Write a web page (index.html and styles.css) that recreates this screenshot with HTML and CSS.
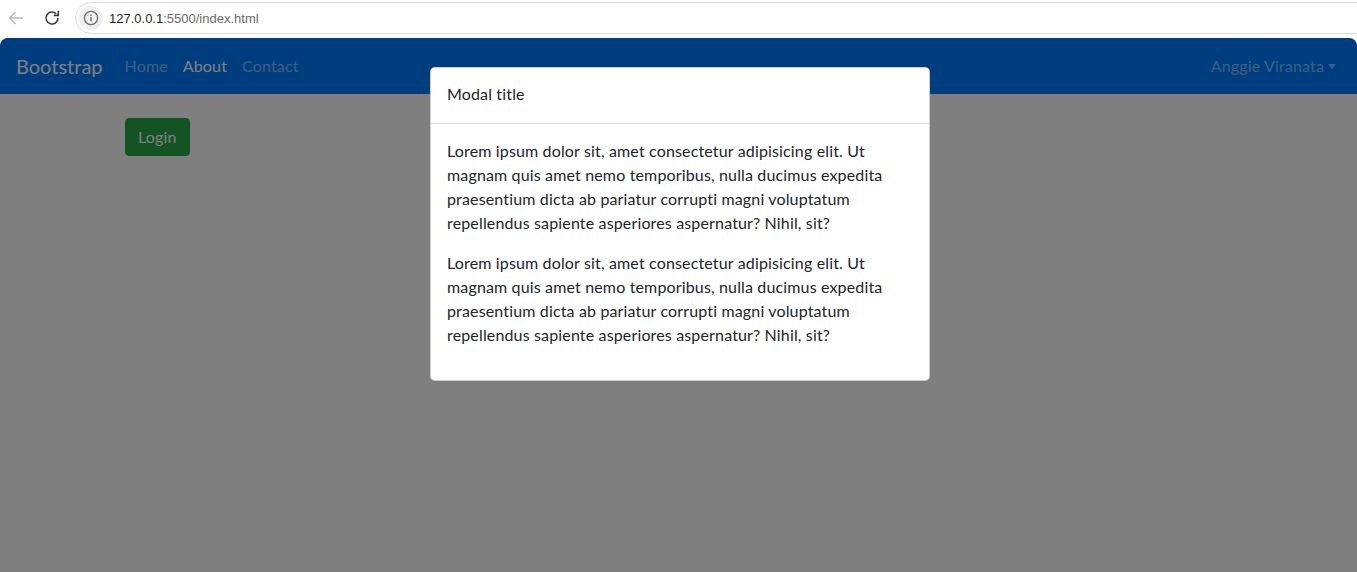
FILE: index.html
```html
<!DOCTYPE html>
<html lang="en">
<head>
<meta charset="utf-8">
<title>Bootstrap</title>
<link rel="stylesheet" href="styles.css">
</head>
<body>
  <header class="browser-bar">
    <button class="tool-btn back" aria-label="Back">
      <svg width="18" height="18" viewBox="0 0 18 18"><path d="M16 9H2.5M8.5 3L2.5 9l6 6" fill="none" stroke="currentColor" stroke-width="1.4"/></svg>
    </button>
    <button class="tool-btn reload" aria-label="Reload">
      <svg width="18" height="18" viewBox="0 0 18 18"><path d="M15 9a6 6 0 1 1-1.76-4.24" fill="none" stroke="currentColor" stroke-width="1.6"/><path d="M15.3 1.8v4.6h-4.6" fill="none" stroke="currentColor" stroke-width="1.6"/></svg>
    </button>
    <div class="omnibox">
      <span class="site-info">
        <svg width="16" height="16" viewBox="0 0 16 16"><circle cx="8" cy="8" r="6.6" fill="none" stroke="currentColor" stroke-width="1.3"/><rect x="7.3" y="7" width="1.4" height="4.4" fill="currentColor"/><rect x="7.3" y="4.5" width="1.4" height="1.4" fill="currentColor"/></svg>
      </span>
      <span class="url"><span class="host">127.0.0.1</span>:5500/index.html</span>
    </div>
  </header>

  <div class="viewport">
    <nav class="navbar">
      <a class="brand" href="#">Bootstrap</a>
      <ul class="nav">
        <li><a class="nav-link" href="#">Home</a></li>
        <li><a class="nav-link active" href="#">About</a></li>
        <li><a class="nav-link" href="#">Contact</a></li>
      </ul>
      <a class="nav-link dropdown" href="#">Anggie Viranata</a>
    </nav>
    <main class="container">
      <button class="btn-success">Login</button>
    </main>

    <div class="backdrop"></div>
    <div class="modal">
      <div class="modal-header">
        <h5 class="modal-title">Modal title</h5>
      </div>
      <div class="modal-body">
        <p>Lorem ipsum dolor sit, amet consectetur adipisicing elit. Ut magnam quis amet nemo temporibus, nulla ducimus expedita praesentium dicta ab pariatur corrupti magni voluptatum repellendus sapiente asperiores aspernatur? Nihil, sit?</p>
        <p>Lorem ipsum dolor sit, amet consectetur adipisicing elit. Ut magnam quis amet nemo temporibus, nulla ducimus expedita praesentium dicta ab pariatur corrupti magni voluptatum repellendus sapiente asperiores aspernatur? Nihil, sit?</p>
      </div>
    </div>
  </div>
</body>
</html>
```

FILE: styles.css
```css
* { box-sizing: border-box; }

html, body {
  margin: 0;
  height: 100%;
  overflow: hidden;
}

body {
  font-family: "Open Sans", "Noto Sans", sans-serif;
  background: #ffffff;
  color: #212529;
  display: flex;
  flex-direction: column;
}

/* browser toolbar */
.browser-bar {
  height: 38px;
  flex: none;
  display: flex;
  align-items: flex-start;
  padding-top: 2px;
  background: #ffffff;
}

.tool-btn {
  width: 30px;
  height: 32px;
  border: 0;
  background: none;
  padding: 0;
  display: flex;
  align-items: center;
  justify-content: center;
}

.tool-btn.back { margin-left: 1px; color: #b8b8b8; }
.tool-btn.reload { margin-left: 6px; color: #3c3c3c; }

.omnibox {
  margin-left: 8px;
  flex: 1;
  height: 32px;
  margin-right: -20px;
  border: 1px solid #dadada;
  border-radius: 16px;
  display: flex;
  align-items: center;
  padding-left: 3px;
  background: #fff;
}

.site-info {
  width: 24px;
  height: 24px;
  border-radius: 50%;
  background: #efefef;
  color: #6e6e6e;
  display: flex;
  align-items: center;
  justify-content: center;
}

.url {
  margin-left: 6px;
  font-family: "Liberation Sans", Arial, sans-serif;
  font-size: 13px;
  color: #6a6a6a;
}

.url .host { color: #1f1f1f; }

/* page viewport */
.viewport {
  flex: 1;
  position: relative;
  background: #ffffff;
  border-radius: 8px 8px 0 0;
  overflow: hidden;
  font-family: "Lato", "Open Sans", sans-serif;
  letter-spacing: 0.15px;
}

.navbar {
  height: 56px;
  background: #007bff;
  display: flex;
  align-items: center;
  padding: 0 13px 0 16px;
}

.brand {
  font-size: 20px;
  color: #fff;
  text-decoration: none;
  margin-right: 14px;
  letter-spacing: 0;
}

.nav {
  list-style: none;
  margin: 0;
  padding: 0;
  display: flex;
  flex: 1;
}

.nav-link {
  display: block;
  padding: 7px 8px 9px;
  color: rgba(255, 255, 255, 0.5);
  text-decoration: none;
  font-size: 16px;
}

.nav .nav-link { padding-left: 8px; padding-right: 7px; }
.nav li:first-child .nav-link { padding-left: 8px; }

.nav-link.active { color: #fff; }

.dropdown::after {
  content: "";
  display: inline-block;
  margin-left: 4px;
  vertical-align: 3px;
  border-top: 5px solid;
  border-left: 4.5px solid transparent;
  border-right: 4.5px solid transparent;
}

.container {
  padding: 24px 0 0 125px;
}

.btn-success {
  font-family: inherit;
  letter-spacing: inherit;
  font-size: 16px;
  line-height: 24px;
  padding: 6px 12px;
  color: #fff;
  background: #28a745;
  border: 1px solid #28a745;
  border-radius: 4px;
}

.backdrop {
  position: absolute;
  inset: 0;
  background: rgba(0, 0, 0, 0.5);
}

.modal {
  position: absolute;
  top: 29px;
  left: 430px;
  width: 500px;
  background: #fff;
  border: 1px solid rgba(0, 0, 0, 0.2);
  border-radius: 5px;
}

.modal-header {
  padding: 14px 16px 17px;
  border-bottom: 1px solid #dee2e6;
}

.modal-title {
  margin: 0;
  font-size: 16px;
  font-weight: 400;
  line-height: 24px;
}

.modal-body {
  padding: 15px 16px 17px;
}

.modal-body p {
  margin: 0 0 16px;
  font-size: 16px;
  line-height: 24px;
}
```
